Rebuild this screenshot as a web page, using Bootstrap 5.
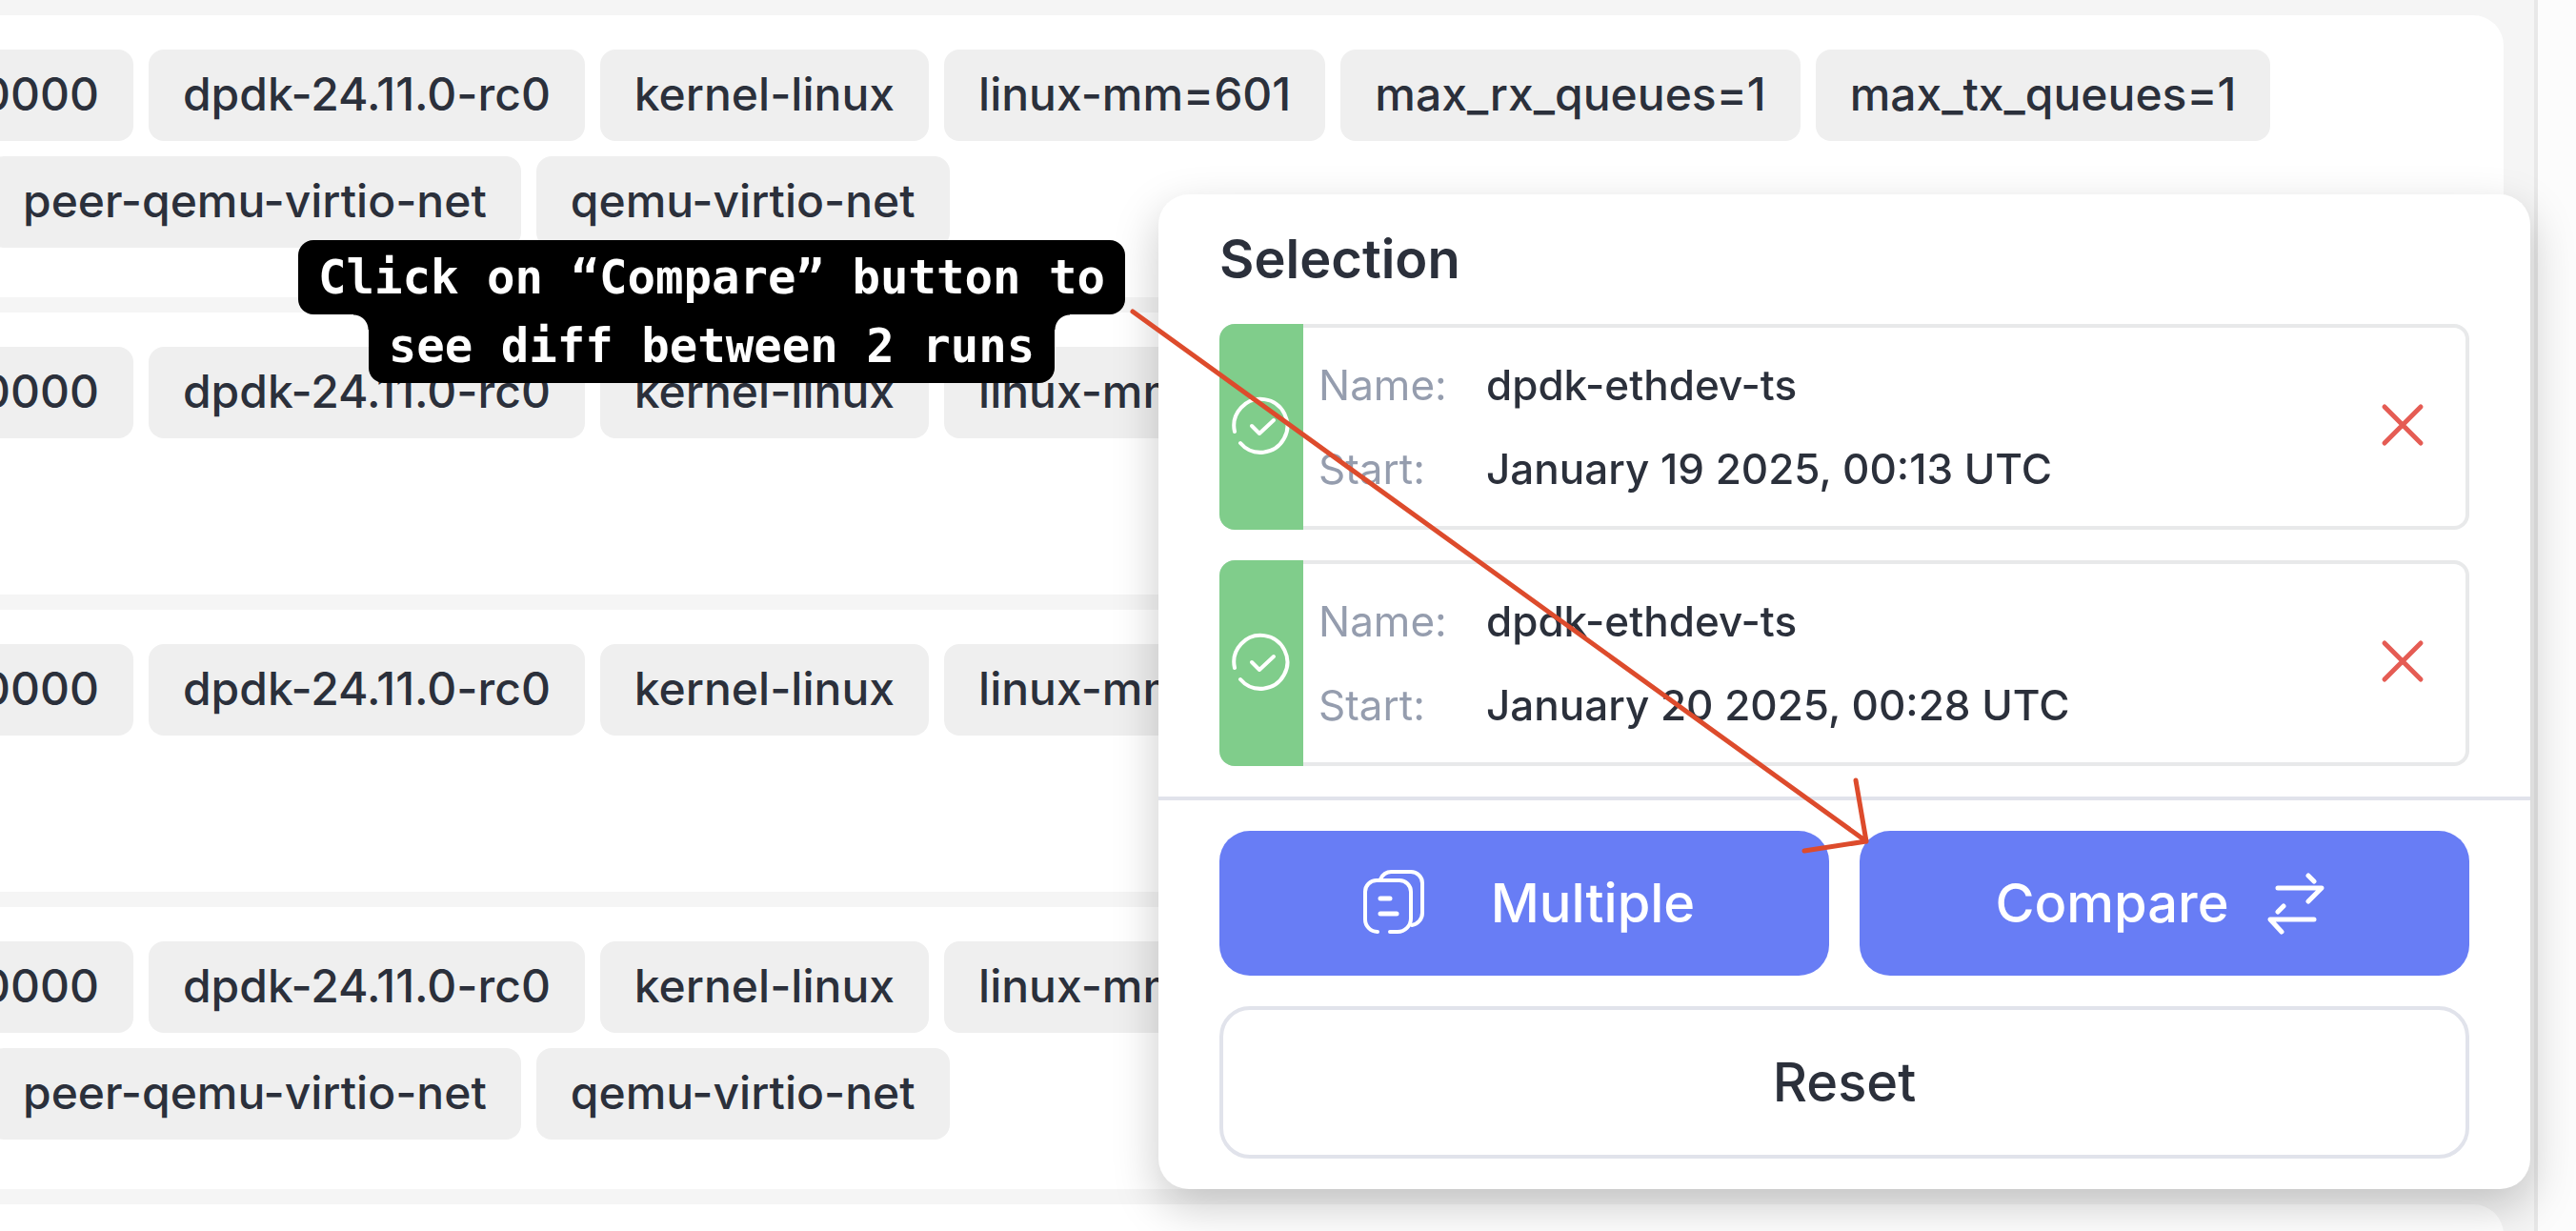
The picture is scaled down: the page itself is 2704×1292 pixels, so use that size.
<!DOCTYPE html>
<html lang="en">
<head>
<meta charset="utf-8">
<meta name="viewport" content="width=device-width, initial-scale=1">
<title>Runs</title>
<link href="https://cdn.jsdelivr.net/npm/bootstrap@5.3.0/dist/css/bootstrap.min.css" rel="stylesheet">
<style>
body { font-family: Inter, sans-serif; font-weight: 500; color: #2b303b; background: #fcfcfc; }
.app-main { margin-right: 40px; padding: 16px 32px 0 0; background: #f5f5f5; border-right: 4px solid #e8e8e8; }
.run-list { gap: 16px; }
.run-item { min-height: 296px; padding: 36px 36px 36px 0; border-radius: 0 32px 32px 0; }
.tag-line { gap: 16px; margin-left: -56px; }
.tag-line + .tag-line { margin-left: -12px; margin-top: 16px; }
.run-tag { padding: 0 36px 2px; border-radius: 16px; background: #efefef; font-size: 48px; line-height: 94px; }

.selection-panel { right: 48px; bottom: 44px; width: 1440px; border-radius: 32px; box-shadow: 0 18px 48px rgba(0,0,0,.21); }
.selection-body { padding: 40px 64px 32px; }
.selection-title { font-size: 56px; line-height: 56px; font-weight: 600; margin-bottom: 40px; }
.picked-runs { gap: 32px; }
.picked-run { border: 4px solid #e8e9ea; border-left: 0; border-radius: 16px; font-size: 44px; line-height: 88px; }
.picked-status { width: 88px; margin: -4px 0; background: #80cd8b; border-radius: 16px 0 0 16px; }
.picked-info { grid-template-columns: 176px 1fr; padding: 16px; }
.picked-info dt { font-weight: 400; color: #959dae; }
.picked-info dd { font-weight: 500; }
.remove-btn { width: 132px; padding: 0 0 4px; }
.selection-actions { padding: 32px 64px; gap: 32px; border-top: 4px solid #e1e3eb; }
.panel-btn { font-size: 56px; line-height: 60px; font-weight: 500; border-radius: 32px; height: 152px; border: 0; }
.fill-btn, .fill-btn:hover { background: #687df5; color: #fff; }
.swap-btn { gap: 30px; }
.line-btn, .line-btn:hover { height: 160px; border: 4px solid #e1e3eb; color: #2b303b; background: #fff; }

.hint { right: 100%; top: 48px; margin-right: 35px; color: #fff; font-family: "DejaVu Sans Mono", monospace; font-weight: 700; font-size: 49px; line-height: 76px; }
.hint-row { padding: 2px 21px 0; background: #000; border-radius: 16px; white-space: nowrap; }
.hint-row + .hint-row { position: relative; margin-top: -6px; border-radius: 0 0 16px 16px; }
.hint-row + .hint-row::before, .hint-row + .hint-row::after { content: ""; position: absolute; top: 6px; width: 16px; height: 16px; }
.hint-row + .hint-row::before { right: 100%; background: radial-gradient(circle at 0 100%, transparent 15px, #000 16px); }
.hint-row + .hint-row::after { left: 100%; background: radial-gradient(circle at 100% 100%, transparent 15px, #000 16px); }
.hint-arrow { left: -36px; top: 112px; pointer-events: none; }
</style>
</head>
<body class="vh-100 overflow-hidden">
<main class="app-main vh-100 overflow-hidden">
  <div class="run-list d-flex flex-column">
    <article class="run-item bg-white">
      <div class="tag-line d-flex">
        <span class="run-tag">0000</span><span class="run-tag">dpdk-24.11.0-rc0</span><span class="run-tag">kernel-linux</span><span class="run-tag">linux-mm=601</span><span class="run-tag">max_rx_queues=1</span><span class="run-tag">max_tx_queues=1</span>
      </div>
      <div class="tag-line d-flex">
        <span class="run-tag">peer-qemu-virtio-net</span><span class="run-tag">qemu-virtio-net</span>
      </div>
    </article>
    <article class="run-item bg-white">
      <div class="tag-line d-flex">
        <span class="run-tag">0000</span><span class="run-tag">dpdk-24.11.0-rc0</span><span class="run-tag">kernel-linux</span><span class="run-tag">linux-mm=601</span>
      </div>
    </article>
    <article class="run-item bg-white">
      <div class="tag-line d-flex">
        <span class="run-tag">0000</span><span class="run-tag">dpdk-24.11.0-rc0</span><span class="run-tag">kernel-linux</span><span class="run-tag">linux-mm=601</span>
      </div>
    </article>
    <article class="run-item bg-white">
      <div class="tag-line d-flex">
        <span class="run-tag">0000</span><span class="run-tag">dpdk-24.11.0-rc0</span><span class="run-tag">kernel-linux</span><span class="run-tag">linux-mm=601</span>
      </div>
      <div class="tag-line d-flex">
        <span class="run-tag">peer-qemu-virtio-net</span><span class="run-tag">qemu-virtio-net</span>
      </div>
    </article>
    <article class="run-item bg-white"></article>
  </div>
</main>

<aside class="selection-panel position-fixed bg-white">
  <div class="selection-body">
    <h2 class="selection-title">Selection</h2>
    <div class="picked-runs d-flex flex-column">
      <section class="picked-run d-flex">
        <div class="picked-status d-flex align-items-center justify-content-center">
          <svg width="64" height="64" viewBox="0 0 64 64" fill="none" stroke="#fff" stroke-width="4" stroke-linecap="round" stroke-linejoin="round"><path d="M4 37A28 28 0 1 1 10 49"/><path d="M22 31l8 8 15-14"/></svg>
        </div>
        <dl class="picked-info d-grid flex-grow-1 mb-0">
          <dt>Name:</dt><dd class="mb-0">dpdk-ethdev-ts</dd>
          <dt>Start:</dt><dd class="mb-0">January 19 2025, 00:13 UTC</dd>
        </dl>
        <button type="button" class="remove-btn btn border-0" aria-label="Remove run">
          <svg width="48" height="48" viewBox="0 0 48 48" fill="none" stroke="#e55c54" stroke-width="5" stroke-linecap="round"><path d="M5 5l38 38M43 5L5 43"/></svg>
        </button>
      </section>
      <section class="picked-run d-flex">
        <div class="picked-status d-flex align-items-center justify-content-center">
          <svg width="64" height="64" viewBox="0 0 64 64" fill="none" stroke="#fff" stroke-width="4" stroke-linecap="round" stroke-linejoin="round"><path d="M4 37A28 28 0 1 1 10 49"/><path d="M22 31l8 8 15-14"/></svg>
        </div>
        <dl class="picked-info d-grid flex-grow-1 mb-0">
          <dt>Name:</dt><dd class="mb-0">dpdk-ethdev-ts</dd>
          <dt>Start:</dt><dd class="mb-0">January 20 2025, 00:28 UTC</dd>
        </dl>
        <button type="button" class="remove-btn btn border-0" aria-label="Remove run">
          <svg width="48" height="48" viewBox="0 0 48 48" fill="none" stroke="#e55c54" stroke-width="5" stroke-linecap="round"><path d="M5 5l38 38M43 5L5 43"/></svg>
        </button>
      </section>
    </div>
  </div>
  <div class="selection-actions d-flex flex-wrap">
    <button type="button" class="panel-btn fill-btn btn col d-flex align-items-center justify-content-center">
      <svg class="me-5" width="96" height="80" viewBox="0 0 96 80" fill="none" stroke="#fff" stroke-width="4" stroke-linecap="round" stroke-linejoin="round"><path d="M25 70a13 13 0 0 1-13-13V28a12 12 0 0 1 12-12h24a12 12 0 0 1 12 12v28a14 14 0 0 1-14 14h-8"/><path d="M28 15a12 12 0 0 1 12-8h20a12 12 0 0 1 12 12v31a13 13 0 0 1-11 13"/><path d="M28 35h10M28 51h17" stroke-width="5"/></svg>
      Multiple
    </button>
    <button type="button" class="panel-btn fill-btn swap-btn btn col d-flex align-items-center justify-content-center">
      Compare
      <svg width="80" height="80" viewBox="0 0 80 80" fill="none" stroke="#fff" stroke-width="5" stroke-linecap="round" stroke-linejoin="round"><path d="M21 24H67L53 38M53 11l6 6M59 57H13L25 70M27 43l-6 6"/></svg>
    </button>
    <button type="button" class="panel-btn line-btn btn w-100">Reset</button>
  </div>

  <div class="hint position-absolute d-flex flex-column align-items-center">
    <span class="hint-row">Click on “Compare” button to</span>
    <span class="hint-row">see diff between 2 runs</span>
  </div>
  <svg class="hint-arrow position-absolute" width="800" height="600" viewBox="0 0 800 600" fill="none" stroke="#dd4b2c" stroke-width="5" stroke-linecap="round" stroke-linejoin="round"><path d="M9 11L779 567M768 503l11 64-65 10"/></svg>
</aside>
<script src="https://cdn.jsdelivr.net/npm/bootstrap@5.3.0/dist/js/bootstrap.bundle.min.js"></script>
</body>
</html>
